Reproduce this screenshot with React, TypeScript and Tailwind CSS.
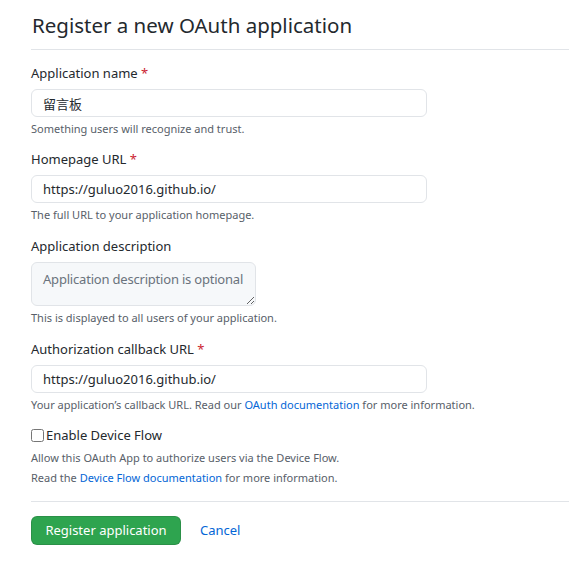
export default function App() {
  return (
    <div className="min-h-screen bg-white pl-[31px] text-[#24292e] font-['Noto_Sans','Noto_Sans_CJK_SC',sans-serif]">
      <div className="border-b border-[#e1e4e8] pb-[6px] pt-[7px]">
        <h1 className="pl-px text-[20.5px] leading-[36px] font-normal">Register a new OAuth application</h1>
      </div>

      <form className="flex flex-col">
        <div className="mt-[13px]">
          <label className="block text-[13px] leading-[21px]">
            Application name <span className="text-[#cb2431]">*</span>
          </label>
          <input
            defaultValue="留言板"
            className="mt-[5px] block h-[28px] w-[396px] rounded-[6px] border border-[#e1e4e8] bg-white px-[11px] text-[13px] outline-none"
          />
          <p className="mt-[3px] text-[11px] leading-[18px] text-[#586069]">Something users will recognize and trust.</p>
        </div>

        <div className="mt-[11px]">
          <label className="block text-[13px] leading-[21px]">
            Homepage URL <span className="text-[#cb2431]">*</span>
          </label>
          <input
            defaultValue="https://guluo2016.github.io/"
            className="mt-[5px] block h-[28px] w-[396px] rounded-[6px] border border-[#e1e4e8] bg-white px-[11px] text-[13px] outline-none"
          />
          <p className="mt-[3px] text-[11px] leading-[18px] text-[#586069]">The full URL to your application homepage.</p>
        </div>

        <div className="mt-[12px]">
          <label className="block text-[13px] leading-[21px]">Application description</label>
          <textarea
            wrap="off"
            placeholder="Application description is optional"
            className="mt-[5px] block h-[44px] w-[225px] resize overflow-hidden rounded-[6px] border border-[#e1e4e8] bg-[#f6f8fa] px-[11px] pt-[6px] text-[13px] leading-[20px] tracking-[-0.2px] outline-none placeholder:text-[#6a737d]"
          />
          <p className="mt-[3px] text-[11px] leading-[18px] text-[#586069]">This is displayed to all users of your application.</p>
        </div>

        <div className="mt-[12px]">
          <label className="block text-[13px] leading-[21px]">
            Authorization callback URL <span className="text-[#cb2431]">*</span>
          </label>
          <input
            defaultValue="https://guluo2016.github.io/"
            className="mt-[5px] block h-[28px] w-[396px] rounded-[6px] border border-[#e1e4e8] bg-white px-[11px] text-[13px] outline-none"
          />
          <p className="mt-[3px] text-[11px] leading-[18px] text-[#586069]">
            Your application’s callback URL. Read our <a className="text-[#0366d6]">OAuth documentation</a> for more information.
          </p>
        </div>

        <div className="mt-[11px]">
          <label className="flex items-center gap-[2px] text-[13px] leading-[21px]">
            <input type="checkbox" className="m-0 h-[13px] w-[13px]" />
            Enable Device Flow
          </label>
          <p className="mt-[3px] text-[11px] leading-[18px] text-[#586069]">Allow this OAuth App to authorize users via the Device Flow.</p>
          <p className="mt-[2px] text-[11px] leading-[18px] text-[#586069]">
            Read the <a className="text-[#0366d6]">Device Flow documentation</a> for more information.
          </p>
        </div>

        <div className="mt-[14px] border-t border-[#e1e4e8] pt-[14px]">
          <div className="flex items-center gap-[19px]">
            <button
              type="button"
              className="h-[29px] w-[150px] rounded-[6px] border border-[#1b1f23]/15 bg-[#2ea44f] text-[13px] text-white"
            >
              Register application
            </button>
            <a className="text-[13px] text-[#0366d6]">Cancel</a>
          </div>
        </div>
      </form>
    </div>
  );
}
